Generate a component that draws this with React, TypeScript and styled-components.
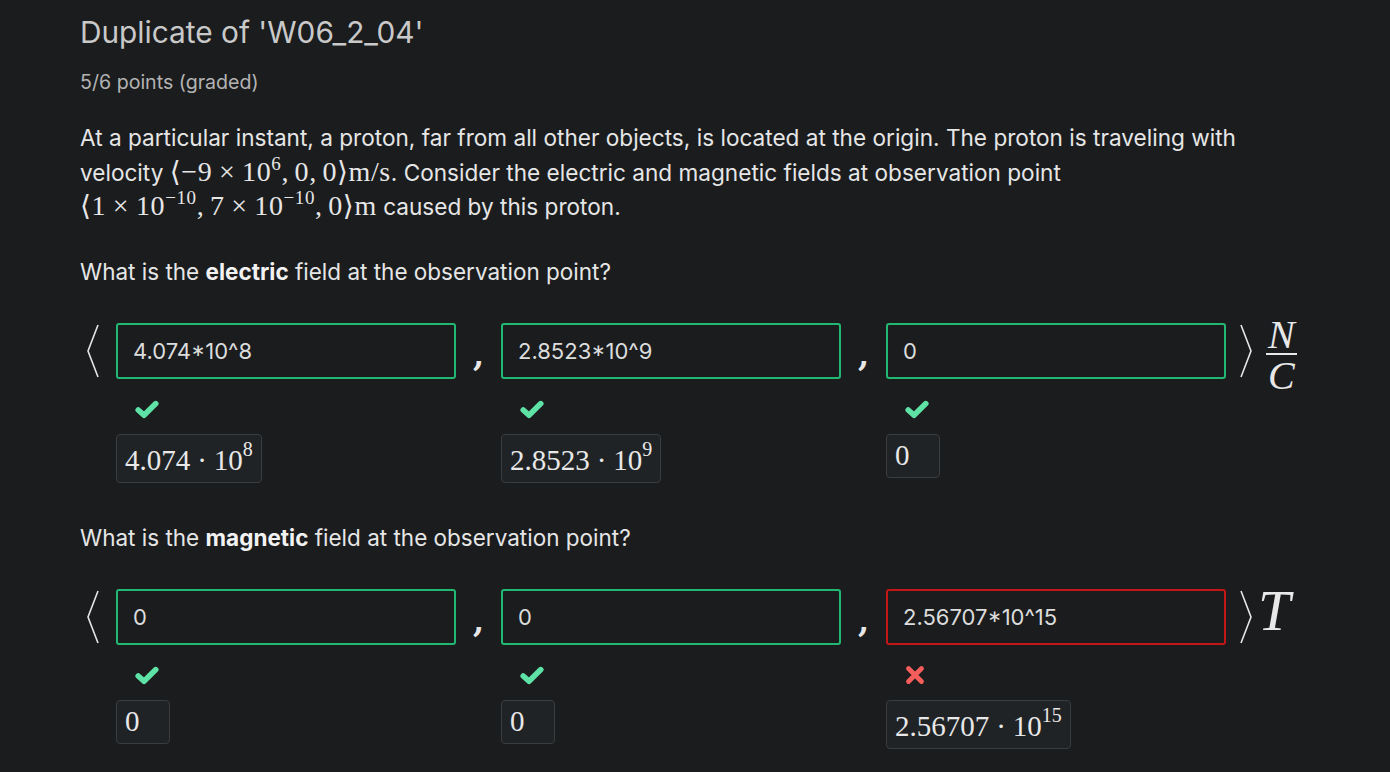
import React from "react";
import styled, { createGlobalStyle } from "styled-components";

const GlobalStyle = createGlobalStyle`
  html, body {
    margin: 0;
    padding: 0;
    background: #1b1c1e;
  }
  body {
    font-family: Inter, "Noto Sans", sans-serif;
    color: #e3e3e3;
  }
`;

// spacing helpers for the typeset math, needed by the data below
const Op = styled.span`
  margin: 0 0.24em;
`;

const Sep = styled.span`
  margin-right: 0.2em;
`;

type Field = {
  value: string;
  correct: boolean;
  result: React.ReactNode;
};

const electric: Field[] = [
  { value: "4.074*10^8", correct: true, result: <>4.074<Op>·</Op>10<sup>8</sup></> },
  { value: "2.8523*10^9", correct: true, result: <>2.8523<Op>·</Op>10<sup>9</sup></> },
  { value: "0", correct: true, result: <>0</> },
];

const magnetic: Field[] = [
  { value: "0", correct: true, result: <>0</> },
  { value: "0", correct: true, result: <>0</> },
  { value: "2.56707*10^15", correct: false, result: <>2.56707<Op>·</Op>10<sup>15</sup></> },
];

const CheckIcon = () => (
  <svg width="24" height="19" viewBox="0 0 24 19">
    <path d="M3.2 10 L9 15.2 L20.8 3.6" fill="none" stroke="#5ee2a6" strokeWidth="5.6" strokeLinejoin="round" strokeLinecap="round" />
  </svg>
);

const CrossIcon = () => (
  <svg width="20" height="20" viewBox="0 0 20 20">
    <path d="M3.5 3.5 L16.5 16.5 M16.5 3.5 L3.5 16.5" fill="none" stroke="#f45d5a" strokeWidth="4.8" strokeLinecap="round" />
  </svg>
);

const AngleLeft = () => (
  <svg width="20" height="56" viewBox="0 0 20 56">
    <path d="M15 2 L5 28 L15 54" fill="none" stroke="#e6e6e6" strokeWidth="1.6" />
  </svg>
);

const AngleRight = () => (
  <svg width="20" height="56" viewBox="0 0 20 56">
    <path d="M5 2 L15 28 L5 54" fill="none" stroke="#e6e6e6" strokeWidth="1.6" />
  </svg>
);

const VectorRow: React.FC<{ fields: Field[]; unit: React.ReactNode }> = ({ fields, unit }) => (
  <Row>
    <Bracket>
      <AngleLeft />
    </Bracket>
    {fields.map((f, i) => (
      <React.Fragment key={i}>
        {i > 0 && <Comma>,</Comma>}
        <FieldCol>
          <Input readOnly value={f.value} $correct={f.correct} />
          <Status>{f.correct ? <CheckIcon /> : <CrossIcon />}</Status>
          <Result>{f.result}</Result>
        </FieldCol>
      </React.Fragment>
    ))}
    <Closing>
      <AngleRight />
      {unit}
    </Closing>
  </Row>
);

const App: React.FC = () => {
  return (
    <>
      <GlobalStyle />
      <Page>
        <Title>Duplicate of 'W06_2_04'</Title>
        <Points>5/6 points (graded)</Points>
        <Paragraph>
          At a particular instant, a proton, far from all other objects, is located at the origin. The
          proton is traveling with velocity{" "}
          <MathText>
            ⟨−9<Op>×</Op>10<sup>6</sup>
            <Sep>,</Sep>0<Sep>,</Sep>0⟩m/s
          </MathText>
          . Consider the electric and magnetic fields at observation point{" "}
          <MathText>
            ⟨1<Op>×</Op>10<sup>−10</sup>
            <Sep>,</Sep>7<Op>×</Op>10<sup>−10</sup>
            <Sep>,</Sep>0⟩m
          </MathText>{" "}
          caused by this proton.
        </Paragraph>

        <Question>
          What is the <b>electric</b> field at the observation point?
        </Question>
        <VectorRow
          fields={electric}
          unit={
            <Fraction>
              <span>N</span>
              <span>C</span>
            </Fraction>
          }
        />

        <Question>
          What is the <b>magnetic</b> field at the observation point?
        </Question>
        <VectorRow fields={magnetic} unit={<UnitT>T</UnitT>} />
      </Page>
    </>
  );
};

export default App;

const Page = styled.div`
  padding: 14px 80px 20px;
`;

const Title = styled.h2`
  margin: 0;
  font-size: 29.8px;
  line-height: 36px;
  font-weight: 400;
  color: #c9c9c9;
`;

const Points = styled.div`
  margin-top: 20px;
  font-size: 19.6px;
  line-height: 24px;
  color: #b3b3b3;
`;

const Paragraph = styled.p`
  margin: 27px 0 0;
  width: 1190px;
  font-size: 22.6px;
  line-height: 33.5px;
  color: #e6e6e6;
`;

const MathText = styled.span`
  font-family: "Liberation Serif", "DejaVu Serif", serif;
  font-size: 28px;
  letter-spacing: 0.6px;
  white-space: nowrap;

  sup {
    font-size: 19px;
    line-height: 0;
    vertical-align: 11px;
  }
`;

const Question = styled.p`
  margin: 34px 0 0;
  font-size: 22.5px;
  line-height: 28px;
  color: #e6e6e6;

  b {
    font-weight: 700;
    color: #f2f2f2;
  }
`;

const Row = styled.div`
  display: flex;
  align-items: flex-start;
  margin-top: 37px;
  padding-bottom: 7px;
`;

const Bracket = styled.div`
  width: 36px;
  height: 56px;
  display: flex;
  align-items: center;
  padding-left: 3px;
  box-sizing: border-box;
`;

const Comma = styled.div`
  width: 45px;
  height: 56px;
  display: flex;
  justify-content: center;
  align-items: flex-end;
  padding-bottom: 7px;
  box-sizing: border-box;
  font-family: "DejaVu Serif", "Liberation Serif", serif;
  font-weight: 700;
  font-size: 32px;
  line-height: 34px;
  color: #e6e6e6;
`;

const FieldCol = styled.div`
  width: 340px;
  display: flex;
  flex-direction: column;
  align-items: flex-start;
`;

const Input = styled.input<{ $correct: boolean }>`
  width: 340px;
  height: 56px;
  box-sizing: border-box;
  background: #1b1c1e;
  border: 2px solid ${(p) => (p.$correct ? "#22b873" : "#c41616")};
  border-radius: 3px;
  padding: 0 15px;
  font-family: Inter, "Noto Sans", sans-serif;
  font-size: 22px;
  color: #dcdcdc;
  outline: none;
`;

const Status = styled.div`
  height: 19px;
  margin: 21px 0 0 19px;
  display: flex;
  align-items: center;
`;

const Result = styled.div`
  margin-top: 15px;
  box-sizing: border-box;
  min-width: 54px;
  padding: 4px 8px 5px 8px;
  background: #202325;
  border: 1px solid #3a3d3f;
  border-radius: 4px;
  font-family: "Liberation Serif", "DejaVu Serif", serif;
  font-size: 29px;
  line-height: 33px;
  color: #e8e8e8;

  &:has(sup) {
    padding-top: 9px;
  }

  sup {
    font-size: 20px;
    line-height: 0;
    vertical-align: 14px;
  }
`;

const Closing = styled.div`
  height: 56px;
  display: flex;
  align-items: center;
  padding-left: 10px;
  gap: 10px;
  font-family: "Liberation Serif", "DejaVu Serif", serif;
  color: #e8e8e8;
`;

const Fraction = styled.div`
  display: flex;
  flex-direction: column;
  align-items: center;
  font-style: italic;
  font-size: 40px;
  line-height: 31px;
  margin-top: 8px;

  span:first-child {
    border-bottom: 2px solid #e8e8e8;
    padding: 0 2px 3px;
  }
  span:last-child {
    padding-top: 5px;
  }
`;

const UnitT = styled.span`
  font-style: italic;
  font-size: 58px;
  line-height: 56px;
  margin-top: -12px;
  margin-left: -8px;
`;
